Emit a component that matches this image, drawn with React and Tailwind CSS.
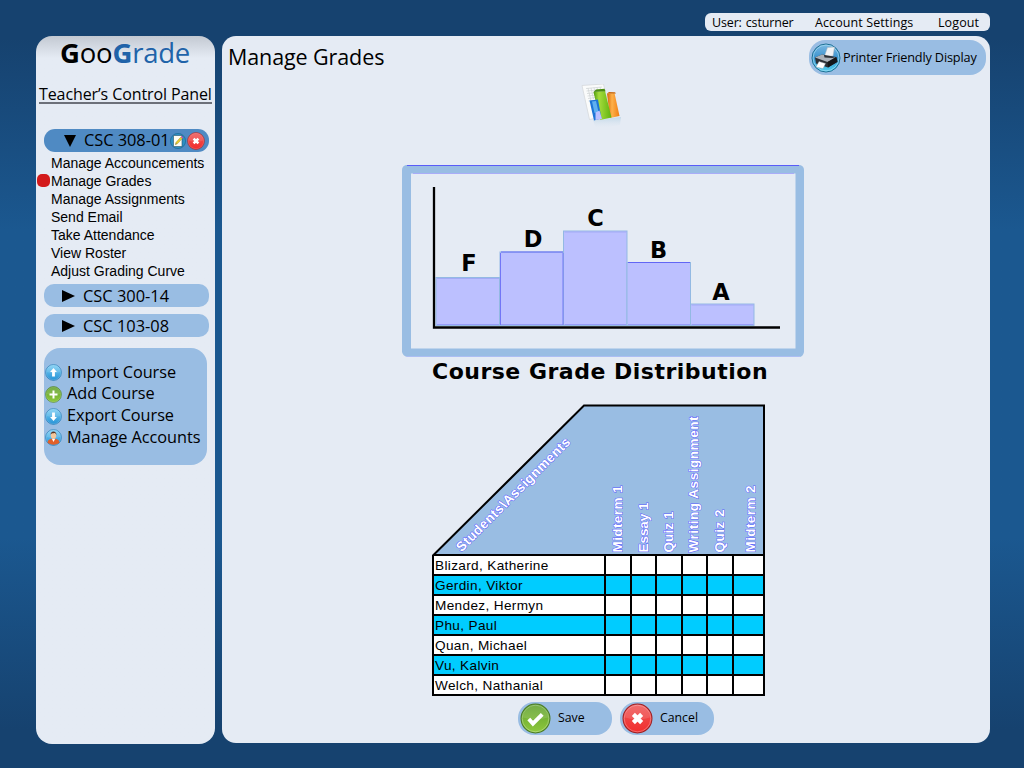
import React from 'react';

const courseLinks = [
  'Manage Accouncements',
  'Manage Grades',
  'Manage Assignments',
  'Send Email',
  'Take Attendance',
  'View Roster',
  'Adjust Grading Curve',
];

const students = [
  'Blizard, Katherine',
  'Gerdin, Viktor',
  'Mendez, Hermyn',
  'Phu, Paul',
  'Quan, Michael',
  'Vu, Kalvin',
  'Welch, Nathanial',
];

const bars = [
  { grade: 'F', x: 34, top: 112.5, label: 67, base: 106 },
  { grade: 'D', x: 98, top: 87, label: 131, base: 82 },
  { grade: 'C', x: 161.5, top: 66, label: 193.5, base: 61 },
  { grade: 'B', x: 225, top: 97.5, label: 256.5, base: 93 },
  { grade: 'A', x: 288.5, top: 139, label: 319, base: 134.5 },
];

const assignments = [
  { name: 'Midterm 1', x: 190, length: 67 },
  { name: 'Essay 1', x: 215.5, length: 50 },
  { name: 'Quiz 1', x: 241, length: 41 },
  { name: 'Writing Assignment', x: 265.5, length: 136 },
  { name: 'Quiz 2', x: 292, length: 43 },
  { name: 'Midterm 2', x: 323, length: 67 },
];

const palettes = {
  blue: ['#7fd0f5', '#2592d6', '#1a6fae'],
  green: ['#5f9f2c', '#8fc93e', '#4a7a26'],
  red: ['#ee5a5a', '#f22c2c', '#9c1f22'],
};

function Orb({ id, tone, className, children }) {
  const [top, bottom, edge] = palettes[tone];
  return (
    <svg viewBox="0 0 30 30" className={className}>
      <defs>
        <linearGradient id={id} x1="0" y1="0" x2="0" y2="1">
          <stop offset="0" stopColor={top} />
          <stop offset="1" stopColor={bottom} />
        </linearGradient>
      </defs>
      <circle cx="15" cy="15" r="14" fill={`url(#${id})`} stroke={edge} strokeWidth="1" />
      <circle cx="15" cy="15" r="12.9" fill="none" stroke="#fff" strokeOpacity=".4" strokeWidth=".7" />
      <path d="M3 14a12 12 0 0 1 24 0q-12 4-24 0z" fill="#fff" opacity=".12" />
      {children}
    </svg>
  );
}

function CrossMark() {
  return <path d="M11 11l8 8m0-8l-8 8" stroke="#fff" strokeWidth="4.2" fill="none" />;
}

function EditIcon() {
  return (
    <svg viewBox="0 0 16 16" className="size-4 shrink-0">
      <circle cx="8" cy="8" r="7.6" fill="#2c8fc4" stroke="#1a6a92" strokeWidth=".7" />
      <path d="M3.5 2.5h8.5v11h-8.5z" fill="#fdfdf4" stroke="#27506b" strokeWidth=".6" />
      <path d="M5.5 11.5l.6-2.2 4.7-5.2 1.5 1.4-4.7 5.1z" fill="#e9cf2e" stroke="#8e7a1c" strokeWidth=".4" />
      <path d="M10.8 4.1l1-1.1 1.5 1.4-1 1.1z" fill="#c94bb5" />
      <path d="M5.5 11.5l.3-1.1.8.7z" fill="#222" />
    </svg>
  );
}

function AccountIcon() {
  return (
    <Orb id="account" tone="blue" className="mt-[2px] size-[17px] shrink-0">
      <path d="M4.5 24c0-5 4-7 10.5-7s10.5 2 10.5 7c-4 5-17 5-21 0z" fill="#e0602a" />
      <path d="M12 17l3 6 3-6z" fill="#fff" />
      <ellipse cx="15" cy="11.5" rx="4.7" ry="6" fill="#f3c79b" />
      <path d="M9.6 11c-.5-9 11.3-9 10.8 0-1-3-2.5-4-4-4-3 1-6 0-6.8 4z" fill="#5b3420" />
    </Orb>
  );
}

function PrinterIcon() {
  return (
    <svg viewBox="0 0 30 30" className="size-[30px] shrink-0">
      <defs>
        <linearGradient id="printer-bg" x1="0" y1="0" x2="0" y2="1">
          <stop offset="0" stopColor="#7db9e2" />
          <stop offset=".5" stopColor="#3a93cf" />
          <stop offset="1" stopColor="#4fd0ee" />
        </linearGradient>
      </defs>
      <circle cx="15" cy="15" r="14" fill="url(#printer-bg)" stroke="#1d6f93" />
      <circle cx="15" cy="15" r="12.9" fill="none" stroke="#a5ddf2" strokeWidth=".7" />
      <path d="M13.5 13l3-8.5 7-.5-1.5 9z" fill="#f1f3f5" stroke="#a9b3bb" strokeWidth=".5" />
      <path d="M4 14.5l7-3 14 2.5 1.5 4.5-9.5 6-12-4z" fill="#2b3036" />
      <path d="M4 14.5l7-3 2 .5.5 2.5 8 .5 3.5-1-8.5 5z" fill="#aab2ba" />
      <path d="M16.5 19l9-5 1 5-9.5 5.5z" fill="#14171a" />
      <path d="M8 18.5l6.5 2-2.5 5-7-1.5z" fill="#fff" stroke="#9aa4ad" strokeWidth=".4" />
    </svg>
  );
}

function ChartIcon() {
  return (
    <svg viewBox="0 0 44 46" className="h-[46px] w-11">
      <defs>
        <linearGradient id="ic-green" x1="0" x2="1">
          <stop offset="0" stopColor="#4b9a0a" />
          <stop offset=".3" stopColor="#a6dc3c" />
          <stop offset="1" stopColor="#5fb30f" />
        </linearGradient>
        <linearGradient id="ic-orange" x1="0" x2="1">
          <stop offset="0" stopColor="#d96606" />
          <stop offset=".4" stopColor="#fdb14a" />
          <stop offset="1" stopColor="#f07d12" />
        </linearGradient>
        <linearGradient id="ic-fade" x1="0" y1="0" x2="0" y2="1">
          <stop offset="0" stopColor="#a9cbe0" stopOpacity=".6" />
          <stop offset="1" stopColor="#e5ebf4" stopOpacity="0" />
        </linearGradient>
      </defs>
      <path d="M12 36l28-3-1 8-24 4z" fill="url(#ic-fade)" />
      <path d="M1 1.5l21.5-1.5 7 31-21 4.5z" fill="#fafbfb" stroke="#d3d6d8" strokeWidth=".7" />
      <path d="M5 4.5l16-1.500M5.500 7l16-1.500M6 9.500l16-1.500M6.500 12l10-1M7 14.500l7-1M7.500 17l5-.7M7 4l3 13M10 4l2.500 11M13 3.600l2 9M16 3.300l1 4M19 3l1 4" stroke="#cfd3d4" strokeWidth=".7" fill="none" />
      <path d="M26 9.500l7.500-.5 5 23L29 34z" fill="url(#ic-orange)" />
      <path d="M26 9.500l2-1.500 6 .2 1 1.300z" fill="#c8690f" />
      <path d="M12.500 8l11.500-1 6.500 26.500L19 36z" fill="url(#ic-green)" />
      <path d="M12.500 8l2.500-2.500 8.500-.8 1 2.500z" fill="#4a8d12" />
      <path d="M8.500 16.500l8.500-1 3.500 19L13 36.500z" fill="#1d74d6" />
      <path d="M11 17.500l4-.5 2.500 11-4 1z" fill="#5fb0f0" />
      <path d="M14.500 28.500l4-2 2.500 8.500-6.500 1z" fill="#bcc0ff" />
    </svg>
  );
}

function CollapsedCourse({ name }) {
  return (
    <div className="ml-2 flex h-[23px] w-[165px] items-center rounded-[10px] bg-[#99bde3] pl-[18px]">
      <svg viewBox="0 0 13 12" className="h-3 w-[13px]">
        <path d="M0 0l13 6-13 6z" />
      </svg>
      <span className="ml-2 text-[16.4px] leading-[22px]">{name}</span>
    </div>
  );
}

function Sidebar() {
  return (
    <aside className="flex h-[708px] w-[179px] flex-col rounded-[16px] bg-[#e5ebf4] bg-linear-to-b from-[#c3c9d2] to-[#e5ebf4] to-[22px]">
      <h1 className="ml-[24px] h-[36px] text-[27.5px] leading-[34px] tracking-[-0.2px] whitespace-nowrap">
        <b>G</b>oo<span className="text-[#2063a9]"><b>G</b>rade</span>
      </h1>
      <div className="mt-[11px] ml-[3px] h-[21px] w-[173px] border-b-2 border-[#6c7079] text-[16px] leading-[22px] tracking-[-0.1px] whitespace-nowrap">
        Teacher’s Control Panel
      </div>
      <div className="mt-[25px] ml-2 flex h-[23px] w-[165px] items-center rounded-[11px] bg-[#4f8ac3] pl-5">
        <svg viewBox="0 0 12 12" className="size-3">
          <path d="M0 0h12l-6 12z" />
        </svg>
        <span className="ml-2 w-[86px] pb-px text-[16.4px] leading-[22px] tracking-[-0.05px] whitespace-nowrap">CSC 308-01</span>
        <EditIcon />
        <Orb id="remove" tone="red" className="ml-px size-[18px] shrink-0">
          <CrossMark />
        </Orb>
      </div>
      <ul className="mt-[2px] font-['Liberation_Sans',sans-serif] text-[14px]">
        {courseLinks.map((name) => (
          <li key={name} className="flex h-[18px] items-center whitespace-nowrap">
            <span className={name === 'Manage Grades' ? 'mr-px mb-px ml-px size-[13px] rounded-[5px] bg-[#d31a1b]' : 'mr-[2px] size-[13px]'} />
            <span className="pt-px">{name}</span>
          </li>
        ))}
      </ul>
      <div className="mt-1 flex flex-col gap-[7px]">
        <CollapsedCourse name="CSC 300-14" />
        <CollapsedCourse name="CSC 103-08" />
      </div>
      <ul className="mt-[11px] ml-2 flex h-[117px] w-[163px] flex-col rounded-[16px] bg-[#99bde3] pt-[13px] pl-[1px] text-[16.3px] tracking-[-0.05px] whitespace-nowrap">
        <li className="flex h-[21.7px] items-center gap-[5px]">
          <Orb id="import" tone="blue" className="mt-[2px] size-[17px] shrink-0">
            <path d="M15 7l6 7h-3.5v8h-5v-8H9z" fill="#fff" />
          </Orb>
          Import Course
        </li>
        <li className="flex h-[21.7px] items-center gap-[5px]">
          <Orb id="add" tone="green" className="mt-[2px] size-[17px] shrink-0">
            <path d="M15 8v14M8 15h14" stroke="#fff" strokeWidth="3.5" />
          </Orb>
          Add Course
        </li>
        <li className="flex h-[21.7px] items-center gap-[5px]">
          <Orb id="export" tone="blue" className="mt-[2px] size-[17px] shrink-0">
            <path d="M15 23l6-7h-3.5V8h-5v8H9z" fill="#fff" />
          </Orb>
          Export Course
        </li>
        <li className="flex h-[21.7px] items-center gap-[5px]">
          <AccountIcon />
          Manage Accounts
        </li>
      </ul>
    </aside>
  );
}

function Distribution() {
  return (
    <svg viewBox="0 0 402 192" className="ml-[180px] h-[192px] w-[402px]">
      <path d="M4 0H398q4 1 4 5V187q-1 5-5 5H5q-4-1-5-5V5q0-4 4-5zM9 8.5V183.5H393.5V8.5z" fill="#99bde3" fillRule="evenodd" />
      <path d="M5 .5H397" stroke="#5a5cf8" />
      <path d="M11 8.5H392" stroke="#a9acf8" />
      <path d="M4 191.7H398" stroke="#bcc0ff" strokeWidth=".7" />
      {bars.map((b) => (
        <g key={b.grade}>
          <rect x={b.x} y={b.top} width="63.5" height={160.5 - b.top} fill="#bcc0ff" stroke="#93b9e3" />
          <path d={b.grade === 'D' || b.grade === 'B' ? `M${b.x + 1} ${b.top}H${b.x + 63}` : `M${b.x + 1} ${b.top + 1}H${b.x + 63}`} stroke={b.grade === 'D' || b.grade === 'B' ? '#6266f5' : '#a3aaf5'} />
          <path d={`M${b.x + 1} 159.5h62`} stroke="#8f93f8" strokeWidth=".8" />
        </g>
      ))}
      <path d="M98.5 88V160M161 88V160" stroke="#7276f6" />
      <path d="M32 22V162.5H378" fill="none" stroke="#000" strokeWidth="2.3" />
      {bars.map((b) => (
        <text key={b.grade} x={b.label} y={b.base} textAnchor="middle" className="font-['DejaVu_Sans',sans-serif] text-[22.5px] font-bold">
          {b.grade}
        </text>
      ))}
    </svg>
  );
}

function GradeTable() {
  return (
    <section className="mt-[17px] ml-[210px] w-[333px]">
      <svg viewBox="0 0 333 152" className="block h-[152px] w-[333px]">
        <path d="M1.5 151L152 1.5H332V151z" fill="#99bde3" stroke="#000" strokeWidth="2" />
        <g className="font-['Liberation_Sans',sans-serif] text-[13.5px] font-bold" fill="#fff" stroke="#5b5bff" strokeWidth="1" paintOrder="stroke">
          <text transform="translate(29.5 148.5) rotate(-45)" textLength="155">Students\Assignments</text>
          {assignments.map((a) => (
            <text key={a.name} transform={`translate(${a.x} 148.5) rotate(-90)`} textLength={a.length}>
              {a.name}
            </text>
          ))}
        </g>
      </svg>
      <div className="flex flex-col gap-[2px] bg-black px-[2px] pb-[2px] font-['Liberation_Sans',sans-serif] text-[13.6px] leading-[18px] tracking-[0.35px]">
        {students.map((name, row) => (
          <div key={name} className="grid h-[18px] grid-cols-[170px_24px_23px_24px_23px_24px_29px] gap-[2px]">
            {[0, 1, 2, 3, 4, 5, 6].map((col) => (
              <div key={col} className={row % 2 ? 'h-[18px] bg-[#00ccff] pt-px pl-px' : 'h-[18px] bg-white pt-px pl-px'}>
                {col === 0 ? name : null}
              </div>
            ))}
          </div>
        ))}
      </div>
    </section>
  );
}

export default function App() {
  return (
    <div className="h-[768px] w-[1024px] overflow-hidden bg-linear-to-b from-[#16426f] from-5% via-[#1b5890] via-30% to-[#1b5890] to-70% font-['Open_Sans','Noto_Sans',sans-serif] text-black">
      <div className="h-full bg-linear-to-b from-transparent from-70% to-[#16426f] to-95%">
        <div className="flex h-9 items-start justify-end pt-[13px] pr-[34px]">
          <nav className="flex h-[18px] w-[285px] rounded-[6px] bg-[#e5ebf4] pl-[7px] text-[12.5px] leading-[19px] tracking-[0.1px] whitespace-nowrap">
            <span className="flex w-[103px] gap-[4px] tracking-[-0.15px]">
              <span>User:</span>
              <span>csturner</span>
            </span>
            <span className="w-[123px]">Account Settings</span>
            <span>Logout</span>
          </nav>
        </div>
        <div className="flex items-start gap-[7px] pl-9">
          <Sidebar />
          <main className="flex h-[707px] w-[768px] flex-col rounded-[14px] bg-[#e5ebf4]">
            <header className="flex h-[46px] items-start justify-between pt-1 pr-1 pl-[6px]">
              <h2 className="text-[21.5px] leading-[34px] tracking-[-0.1px]">Manage Grades</h2>
              <button className="flex h-[35px] w-[177px] items-center rounded-[16px] bg-[#99bde3] pl-[2px] text-[12.7px] whitespace-nowrap">
                <PrinterIcon />
                <span className="ml-[2px] pt-px tracking-[-0.15px]">Printer Friendly Display</span>
              </button>
            </header>
            <div className="ml-[359px] h-[83px] pt-[2px]">
              <ChartIcon />
            </div>
            <Distribution />
            <h3 className="ml-[210px] h-[30px] font-['DejaVu_Sans',sans-serif] text-[22px] leading-[30px] font-bold tracking-[0.5px] whitespace-nowrap">
              Course Grade Distribution
            </h3>
            <GradeTable />
            <div className="mt-[6px] ml-[296px] flex gap-2 text-[12.3px]">
              <button className="flex h-[33px] w-[94px] items-center rounded-[16px] bg-[#99bde3] pl-[2px]">
                <Orb id="save" tone="green" className="size-[31px] shrink-0">
                  <path d="M8.5 15.5l4 4.5 9-9" stroke="#fff" strokeWidth="3.8" fill="none" />
                </Orb>
                <span className="ml-[7px]">Save</span>
              </button>
              <button className="flex h-[33px] w-[94px] items-center rounded-[16px] bg-[#99bde3] pl-[2px]">
                <Orb id="cancel" tone="red" className="size-[31px] shrink-0">
                  <CrossMark />
                </Orb>
                <span className="ml-[7px]">Cancel</span>
              </button>
            </div>
          </main>
        </div>
      </div>
    </div>
  );
}
